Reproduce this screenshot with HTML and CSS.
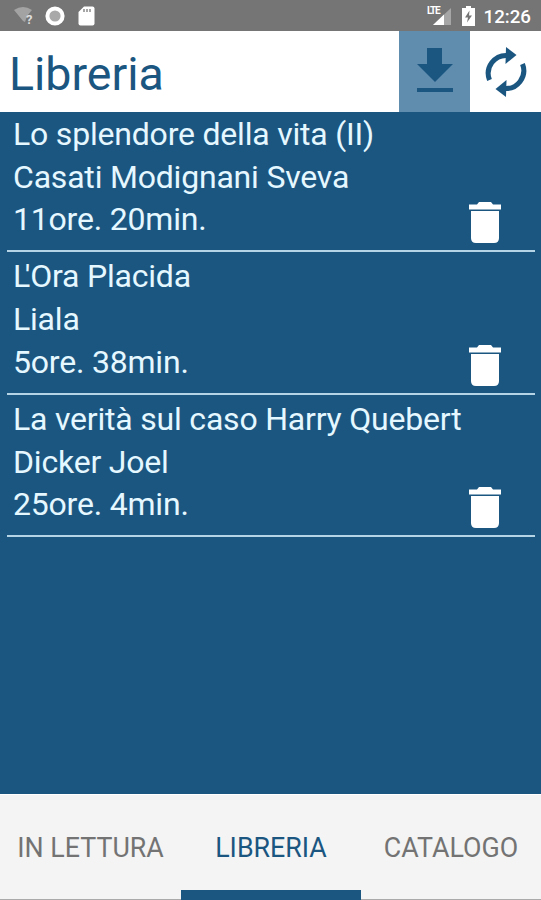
FILE: index.html
```html
<!DOCTYPE html>
<html lang="it">
<head>
    <meta charset="UTF-8">
    <meta name="viewport" content="width=device-width, initial-scale=1.0">
    <title>Libreria</title>
    <link rel="stylesheet" href="styles.css">
</head>
<body>
    <div class="status-bar">
        <div class="status-left">
            <svg class="wifi" width="22" height="20" viewBox="0 0 22 20">
                <path d="M1 4 Q10 -2 19 4 L14 10 L12 16 L10 15 Z" fill="#a3a3a3"/>
                <text x="13" y="18" class="wifi-mark">?</text>
            </svg>
            <svg width="20" height="20" viewBox="0 0 20 20">
                <circle cx="10" cy="10" r="7.6" fill="#a9a9a9" stroke="#fff" stroke-width="4"/>
            </svg>
            <svg class="card" width="17" height="20" viewBox="0 0 17 20">
                <path d="M6 0.5 H14.500 Q16.500 0.500 16.500 2.500 V17.500 Q16.500 19.500 14.500 19.500 H2.500 Q0.500 19.500 0.500 17.500 V6 Z" fill="#fff"/>
                <path d="M6 3 V6 M9 3 V6 M12 3 V6" stroke="#8a8a8a" stroke-width="1.500"/>
            </svg>
        </div>
        <div class="status-right">
            <svg class="signal" width="26" height="22" viewBox="0 0 26 22">
                <path d="M25 4 V21 H7 Z" fill="#a6a6a6"/>
                <path d="M18 10.500 V21 H7 Z" fill="#fff"/>
                <text x="1" y="10" class="lte">LTE</text>
            </svg>
            <svg class="battery" width="13" height="20" viewBox="0 0 13 20">
                <path d="M4 0 H9 V2 H13 V20 H0 V2 H4 Z" fill="#fff"/>
                <path d="M7.500 4.500 L3 11.500 H6 L5 16.500 L10 9.500 H7 Z" fill="#757575"/>
            </svg>
            <span class="clock">12:26</span>
        </div>
    </div>

    <div class="header">
        <h1>Libreria</h1>
        <button class="download" aria-label="Scarica">
            <svg width="38" height="46" viewBox="0 0 38 46">
                <path d="M11 1 H26 V17 H37 L19 35 L1 17 H11 Z"/>
                <path d="M1 41 H37 V45 H1 Z"/>
            </svg>
        </button>
        <button class="refresh" aria-label="Aggiorna">
            <svg width="44" height="50" viewBox="0 0 44 50">
                <path d="M5.500 33 A18 18 0 0 1 24 8.500" class="arc"/>
                <path d="M38.500 17 A18 18 0 0 1 20 41.500" class="arc"/>
                <path d="M22 0 L32.500 8 L21.500 17 Z"/>
                <path d="M22 50 L11.500 42 L22.500 33 Z"/>
            </svg>
        </button>
    </div>

    <div class="book-list">
        <div class="book">
            <p>Lo splendore della vita (II)</p>
            <p>Casati Modignani Sveva</p>
            <p>11ore. 20min.</p>
            <button class="delete" aria-label="Elimina">
                <svg width="32" height="41" viewBox="0 0 32 41">
                    <path d="M0 2.500 H8 L10 0 H22 L24 2.500 H32 V7.500 H0 Z"/>
                    <path d="M2 9 H30 V36 Q30 41 25 41 H7 Q2 41 2 36 Z"/>
                </svg>
            </button>
        </div>
        <div class="book">
            <p><span class="initial">L</span>'Ora Placida</p>
            <p>Liala</p>
            <p>5ore. 38min.</p>
            <button class="delete" aria-label="Elimina">
                <svg width="32" height="41" viewBox="0 0 32 41">
                    <path d="M0 2.500 H8 L10 0 H22 L24 2.500 H32 V7.500 H0 Z"/>
                    <path d="M2 9 H30 V36 Q30 41 25 41 H7 Q2 41 2 36 Z"/>
                </svg>
            </button>
        </div>
        <div class="book">
            <p>La verità sul caso Harry Quebert</p>
            <p>Dicker Joel</p>
            <p>25ore. 4min.</p>
            <button class="delete" aria-label="Elimina">
                <svg width="32" height="41" viewBox="0 0 32 41">
                    <path d="M0 2.500 H8 L10 0 H22 L24 2.500 H32 V7.500 H0 Z"/>
                    <path d="M2 9 H30 V36 Q30 41 25 41 H7 Q2 41 2 36 Z"/>
                </svg>
            </button>
        </div>
    </div>

    <div class="tabs">
        <a class="tab">IN LETTURA</a>
        <a class="tab active">LIBRERIA</a>
        <a class="tab">CATALOGO</a>
    </div>
</body>
</html>
```
FILE: styles.css
```css
* {
    box-sizing: border-box;
}
body {
    margin: 0;
    height: 900px;
    display: flex;
    flex-direction: column;
    overflow: hidden;
    font-family: Roboto, sans-serif;
    background-color: #1b5681;
}
svg {
    display: block;
}
button {
    border: none;
    padding: 0;
    background: none;
}

/* Status bar */
.status-bar {
    height: 31px;
    flex: none;
    display: flex;
    justify-content: space-between;
    padding: 6px 10px 0 13px;
    background-color: #757575;
    color: #fff;
}
.status-left, .status-right {
    display: flex;
    align-items: flex-start;
}
.status-left {
    gap: 10px;
}
.card {
    margin-left: 3px;
}
.wifi-mark {
    font-size: 13px;
    font-weight: bold;
    fill: #ddd;
}
.signal {
    margin: -2px 10px 0 0;
}
.lte {
    font-size: 10px;
    font-weight: bold;
    letter-spacing: -1.3px;
    fill: #fff;
}
.battery {
    margin-right: 9px;
}
.clock {
    font-size: 18.7px;
    font-weight: 500;
    line-height: 22px;
}

/* Header */
.header {
    height: 81px;
    flex: none;
    display: flex;
    background-color: #fff;
}
h1 {
    flex: 1;
    margin: 0;
    padding: 3px 0 0 9px;
    font-size: 46.5px;
    font-weight: 400;
    line-height: 81px;
    color: #1b5681;
}
.header svg {
    fill: #1b5681;
}
.download {
    width: 71px;
    padding: 0 0 3px 17px;
    background-color: #608dae;
}
.refresh {
    width: 71px;
    padding: 0 0 0 14px;
}
.refresh .arc {
    fill: none;
    stroke: #1b5681;
    stroke-width: 5;
}

/* Books */
.book-list {
    flex: 1;
    padding: 1px 6px 0 7px;
}
.book {
    position: relative;
    height: 139px;
    padding-left: 6px;
    border-bottom: 2px solid #b5d5e6;
    color: #e6f8ff;
}
.book + .book {
    height: 142.6px;
    padding-top: 3.3px;
}
.book p {
    margin: 0;
    font-size: 32px;
    line-height: 42.7px;
    letter-spacing: -0.2px;
}
.book .initial {
    letter-spacing: -5.5px;
}
.delete {
    position: absolute;
    right: 34px;
    bottom: 7px;
}
.delete svg {
    fill: #fff;
}

/* Bottom tabs */
.tabs {
    height: 106px;
    flex: none;
    display: grid;
    grid-template-columns: 181px 180px 180px;
    grid-template-rows: 105px;
    background-color: #f4f4f4;
    border-top: 1px solid #fff;
}
.tab {
    border-bottom: 1px solid #aaa;
    text-align: center;
    font-size: 26.8px;
    line-height: 106px;
    color: #737373;
}
.tab.active {
    border-bottom: 10px solid #1b5681;
    color: #1b5681;
}
```
